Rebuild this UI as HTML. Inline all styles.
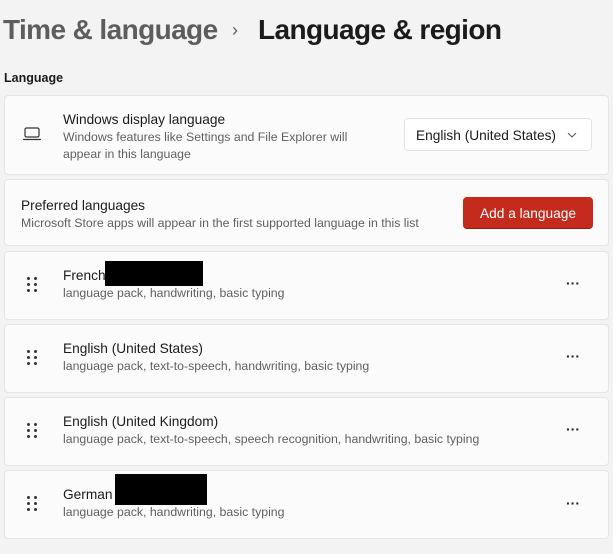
<!DOCTYPE html>
<html><head><meta charset="utf-8"><style>
*{margin:0;padding:0;box-sizing:border-box}
body{width:613px;height:554px;background:#f3f3f3;font-family:"Liberation Sans",sans-serif;color:#1b1b1b;position:relative;overflow:hidden}
.a{position:absolute}
.card{position:absolute;left:4px;width:605px;background:#fbfbfb;border:1px solid #e5e5e5;border-radius:4px}
.t{font-size:13.7px;color:#1b1b1b;white-space:nowrap}
.s{font-size:12.3px;color:#5f5f5f;white-space:nowrap;line-height:17px}
.dots{position:absolute;left:27px;width:10px;height:16px}
.dots i{position:absolute;width:3px;height:3px;border-radius:50%;background:#333}
.more{position:absolute;left:566px;font-size:14px;font-weight:bold;color:#222}
.blk{position:absolute;background:#000}
</style></head><body>
<div class="a" style="left:3px;top:14px;font-size:28px;font-weight:bold;color:#5d5d5d;letter-spacing:-0.6px;white-space:nowrap">Time &amp; language</div>
<div class="a" style="left:232px;top:20px;font-size:18px;color:#5d5d5d">›</div>
<div class="a" style="left:258px;top:14px;font-size:28px;font-weight:bold;color:#1b1b1b;letter-spacing:-0.6px;white-space:nowrap">Language &amp; region</div>
<div class="a" style="left:4px;top:71px;font-size:12.5px;font-weight:bold">Language</div>

<div class="card" style="top:95px;height:80px"></div>
<svg class="a" style="left:22px;top:127px" width="20" height="14" viewBox="0 0 20 14"><rect x="3" y="1" width="14" height="9" rx="1.5" fill="none" stroke="#333" stroke-width="1.2"/><path d="M1 12.5h18" stroke="#333" stroke-width="1.2"/></svg>
<div class="a t" style="left:63px;top:112px">Windows display language</div>
<div class="a s" style="left:63px;top:129px">Windows features like Settings and File Explorer will<br>appear in this language</div>
<div class="a" style="left:404px;top:118px;width:188px;height:33px;background:#fff;border:1px solid #e2e2e2;border-radius:4px"></div>
<div class="a t" style="left:416px;top:128px">English (United States)</div>
<svg class="a" style="left:567px;top:132px" width="10" height="6" viewBox="0 0 10 6"><path d="M1 1l4 4 4-4" fill="none" stroke="#555" stroke-width="1"/></svg>

<div class="card" style="top:179px;height:67px"></div>
<div class="a t" style="left:21px;top:198px">Preferred languages</div>
<div class="a s" style="left:21px;top:215px">Microsoft Store apps will appear in the first supported language in this list</div>
<div class="a" style="left:463px;top:197px;width:130px;height:32px;background:#c42b1c;border-radius:4px;border-bottom:1px solid #8e1f14"></div>
<div class="a" style="left:463px;top:206px;width:130px;text-align:center;font-size:13.7px;color:#fff">Add a language</div>

<div class="card" style="top:251px;height:69px"></div>
<div class="card" style="top:324px;height:69px"></div>
<div class="card" style="top:397px;height:69px"></div>
<div class="card" style="top:470px;height:69px"></div>

<div class="dots" style="top:277px"><i style="left:0;top:0"></i><i style="left:7px;top:0"></i><i style="left:0;top:6px"></i><i style="left:7px;top:6px"></i><i style="left:0;top:12px"></i><i style="left:7px;top:12px"></i></div>
<div class="dots" style="top:350px"><i style="left:0;top:0"></i><i style="left:7px;top:0"></i><i style="left:0;top:6px"></i><i style="left:7px;top:6px"></i><i style="left:0;top:12px"></i><i style="left:7px;top:12px"></i></div>
<div class="dots" style="top:423px"><i style="left:0;top:0"></i><i style="left:7px;top:0"></i><i style="left:0;top:6px"></i><i style="left:7px;top:6px"></i><i style="left:0;top:12px"></i><i style="left:7px;top:12px"></i></div>
<div class="dots" style="top:496px"><i style="left:0;top:0"></i><i style="left:7px;top:0"></i><i style="left:0;top:6px"></i><i style="left:7px;top:6px"></i><i style="left:0;top:12px"></i><i style="left:7px;top:12px"></i></div>

<div class="a t" style="left:63px;top:268px">French</div>
<div class="blk" style="left:105px;top:261px;width:98px;height:25px"></div>
<div class="a s" style="left:63px;top:285px">language pack, handwriting, basic typing</div>

<div class="a t" style="left:63px;top:341px">English (United States)</div>
<div class="a s" style="left:63px;top:358px">language pack, text-to-speech, handwriting, basic typing</div>

<div class="a t" style="left:63px;top:414px">English (United Kingdom)</div>
<div class="a s" style="left:63px;top:431px">language pack, text-to-speech, speech recognition, handwriting, basic typing</div>

<div class="a t" style="left:63px;top:487px">German</div>
<div class="blk" style="left:115px;top:474px;width:92px;height:31px"></div>
<div class="a s" style="left:63px;top:504px">language pack, handwriting, basic typing</div>

<div class="more" style="top:275px">···</div>
<div class="more" style="top:348px">···</div>
<div class="more" style="top:421px">···</div>
<div class="more" style="top:495px">···</div>
</body></html>
